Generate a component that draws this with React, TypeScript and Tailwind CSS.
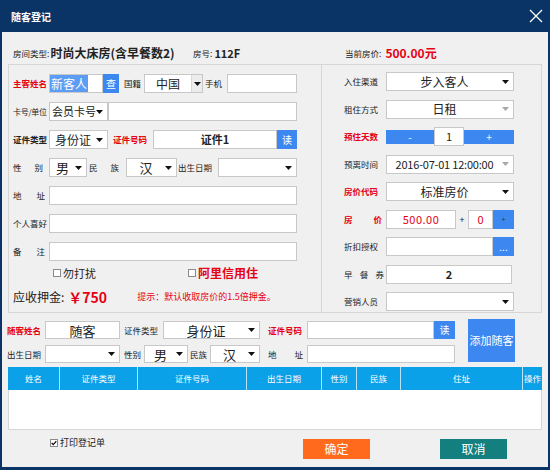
import React from "react";

const RED = "text-[#e60012]";

function Arrow({ muted = false }: { muted?: boolean }) {
  return (
    <svg width="7" height="4" viewBox="0 0 7 4" className="shrink-0">
      <path d="M0 0h7L3.5 4z" fill={muted ? "#a8a8a8" : "#111"} />
    </svg>
  );
}

function Label({
  text,
  className = "",
  red = false,
  bold = false,
}: {
  text: string;
  className?: string;
  red?: boolean;
  bold?: boolean;
}) {
  const chars = text.split(" ");
  return (
    <span
      className={`flex shrink-0 items-center whitespace-nowrap text-[8.5px] leading-none ${
        chars.length > 1 ? "justify-between" : ""
      } ${red ? "font-bold text-[#e60012]" : ""} ${bold ? "font-bold" : ""} ${className}`}
    >
      {chars.map((c, i) => (
        <span key={i}>{c}</span>
      ))}
    </span>
  );
}

function Select({
  value = "",
  className = "",
  valueClass = "text-[12px]",
  muted = false,
  boxed = false,
}: {
  value?: string;
  className?: string;
  valueClass?: string;
  muted?: boolean;
  boxed?: boolean;
}) {
  return (
    <div
      className={`flex h-full shrink-0 items-center border border-[#c8c8c8] bg-white ${className}`}
    >
      <span className={`flex-1 whitespace-nowrap text-center leading-none ${valueClass}`}>{value}</span>
      {boxed ? (
        <span className="flex h-full w-[11px] items-center justify-center border-l border-[#d8d8d8] bg-[#ececec]">
          <Arrow />
        </span>
      ) : (
        <span className="pr-[4px]">
          <Arrow muted={muted} />
        </span>
      )}
    </div>
  );
}

function Input({
  value = "",
  className = "",
  valueClass = "",
}: {
  value?: string;
  className?: string;
  valueClass?: string;
}) {
  return (
    <div
      className={`flex h-full shrink-0 items-center justify-center border border-[#c8c8c8] bg-white ${className}`}
    >
      <span className={`whitespace-nowrap leading-none ${valueClass}`}>{value}</span>
    </div>
  );
}

function BlueBtn({ text, className = "" }: { text: string; className?: string }) {
  return (
    <div
      className={`flex h-full shrink-0 items-center justify-center bg-[#3d87f1] text-[10px] leading-none text-white ${className}`}
    >
      {text}
    </div>
  );
}

function Check({ checked = false }: { checked?: boolean }) {
  return (
    <span className="flex h-[8px] w-[8px] shrink-0 items-center justify-center border border-[#8a8a8a] bg-white">
      {checked && (
        <svg width="7" height="6" viewBox="0 0 7 6">
          <path d="M0.8 3l1.8 1.8L6.2 1" stroke="#111" strokeWidth="1.4" fill="none" />
        </svg>
      )}
    </span>
  );
}

const columns: [string, string][] = [
  ["姓名", "w-[51px]"],
  ["证件类型", "w-[78px]"],
  ["证件号码", "w-[109px]"],
  ["出生日期", "w-[75px]"],
  ["性别", "w-[35px]"],
  ["民族", "w-[44px]"],
  ["住址", "w-[122px]"],
  ["操作", "w-[20px]"],
];

export default function App() {
  return (
    <div className="flex h-[470px] w-[550px] flex-col bg-[#0b3466] px-[2px] pb-[3px] font-['Noto_Sans_CJK_SC','Noto_Sans',sans-serif] text-[#222]">
      {/* title bar */}
      <div className="flex h-[32px] shrink-0 items-center justify-between pl-[9px] pr-[5px]">
        <span className="text-[10px] font-bold text-white">随客登记</span>
        <svg width="14" height="14" viewBox="0 0 14 14">
          <path d="M1 1l12 12M13 1L1 13" stroke="#fff" strokeWidth="1.3" />
        </svg>
      </div>

      <div className="flex flex-1 flex-col bg-[#f0f0f0]">
        {/* room header */}
        <div className="flex h-[32px] shrink-0 items-center pl-[11px] pt-[10px]">
          <div className="flex w-[180px] items-center gap-[1px]">
            <span className="text-[8.5px]">房间类型:</span>
            <span className="text-[12px] font-bold">时尚大床房(含早餐数2)</span>
          </div>
          <div className="flex w-[152px] items-center gap-[2px]">
            <span className="text-[8.5px]">房号:</span>
            <span className="text-[11px] font-bold">112F</span>
          </div>
          <div className="flex items-center gap-[4px]">
            <span className="text-[8.5px]">当前房价:</span>
            <span className={`text-[12px] font-bold ${RED}`}>500.00元</span>
          </div>
        </div>

        {/* main form */}
        <div className="mx-[6px] flex h-[249px] shrink-0 border border-[#d6d6d6]">
          <div className="flex w-[313px] shrink-0 flex-col border-r border-[#d6d6d6] pl-[4px] pt-[9px]">
            <div className="flex flex-col gap-[9px]">
              <div className="flex h-[19px] items-center">
                <Label text="主客姓名" red className="w-[36px]" />
                <div className="flex h-full w-[54px] items-center border border-[#c8c8c8] bg-white">
                  <span className="h-full bg-[#5b9df4] px-[1px] text-[12px] leading-[17px] text-white">
                    新客人
                  </span>
                </div>
                <BlueBtn text="查" className="w-[16px]" />
                <Label text="国籍" className="ml-[5px] w-[20px]" />
                <Select value="中国" boxed className="w-[59px]" />
                <Label text="手机" className="ml-[2px] w-[20px]" />
                <Input className="ml-[2px] w-[70px]" />
              </div>
              <div className="flex h-[19px] items-center">
                <Label text="卡号/单位" className="w-[36px] !text-[8px] tracking-[-0.3px]" />
                <Select value="会员卡号" valueClass="text-[11px] text-left pl-[2px]" className="w-[59px]" />
                <Input className="w-[189px]" />
              </div>
              <div className="flex h-[19px] items-center">
                <Label text="证件类型" bold className="w-[36px]" />
                <Select value="身份证" className="w-[59px]" />
                <Label text="证件号码" red className="ml-[5px] w-[35px]" />
                <Input value="证件1" valueClass="text-[11px] font-bold" className="ml-[5px] w-[124px]" />
                <BlueBtn text="读" className="w-[20px]" />
              </div>
              <div className="flex h-[19px] items-center">
                <span className="w-[36px] shrink-0">
                  <Label text="性 别" className="w-[30px]" />
                </span>
                <Select value="男" valueClass="text-[13px]" className="w-[38px]" />
                <Label text="民 族" className="ml-[2px] w-[30px]" />
                <Select value="汉" valueClass="text-[13px]" className="ml-[7px] w-[51px]" />
                <Label text="出生日期" className="ml-[1px] w-[36px]" />
                <Select className="ml-[4px] w-[79px]" />
              </div>
              {["地 址", "个人喜好", "备 注"].map((t) => (
                <div key={t} className="flex h-[19px] items-center">
                  <span className="w-[36px] shrink-0">
                    <Label text={t} className={t.includes(" ") ? "w-[32px]" : ""} />
                  </span>
                  <Input className="w-[248px]" />
                </div>
              ))}
            </div>
            <div className="mt-[3px] flex h-[18px] items-center pl-[40px]">
              <div className="flex w-[135px] items-center gap-[2px]">
                <Check />
                <span className="text-[11px]">勿打扰</span>
              </div>
              <div className="flex items-center gap-[2px]">
                <Check />
                <span className={`text-[12px] font-bold ${RED}`}>阿里信用住</span>
              </div>
            </div>
            <div className="mt-[6px] flex h-[18px] items-center">
              <span className="text-[12px]">应收押金:</span>
              <span className={`ml-[4px] w-[69px] text-[14px] font-bold ${RED}`}>￥750</span>
              <span className={`text-[9px] ${RED}`}>提示：默认收取房价的1.5倍押金。</span>
            </div>
          </div>

          <div className="flex flex-1 flex-col gap-[8.5px] pl-[22px] pt-[7px]">
            <div className="flex h-[19px] items-center">
              <Label text="入住渠道" className="w-[42px]" />
              <Select value="步入客人" className="w-[128px]" />
            </div>
            <div className="flex h-[19px] items-center">
              <Label text="租住方式" className="w-[42px]" />
              <Select value="日租" muted className="w-[128px]" />
            </div>
            <div className="flex h-[19px] items-center">
              <Label text="预住天数" red className="w-[42px]" />
              <div className="flex h-full w-[128px] items-center">
                <div className="flex h-[14px] w-[48px] items-center justify-center bg-[#3d87f1] text-[10px] leading-none text-white">
                  -
                </div>
                <div className="flex h-full w-[30px] items-center justify-center border border-[#c8c8c8] bg-white text-[11px] leading-none">
                  1
                </div>
                <div className="flex h-[14px] flex-1 items-center justify-center bg-[#3d87f1] text-[10px] leading-none text-white">
                  +
                </div>
              </div>
            </div>
            <div className="flex h-[19px] items-center">
              <Label text="预离时间" className="w-[42px]" />
              <Select
                value="2016-07-01 12:00:00"
                valueClass="text-[11px] tracking-[-0.2px]"
                muted
                className="w-[128px]"
              />
            </div>
            <div className="flex h-[19px] items-center">
              <Label text="房价代码" red className="w-[42px]" />
              <Select value="标准房价" className="w-[128px]" />
            </div>
            <div className="flex h-[19px] items-center">
              <span className="w-[42px] shrink-0">
                <Label text="房 价" red className="w-[38px]" />
              </span>
              <Input value="500.00" valueClass={`text-[11px] tracking-[0.5px] ${RED}`} className="w-[70px]" />
              <span className="w-[12px] text-center text-[9px] leading-none">+</span>
              <Input value="0" valueClass={`text-[11px] ${RED}`} className="w-[25px]" />
              <BlueBtn text="+" className="w-[21px] !text-[7px] !text-[#333]" />
            </div>
            <div className="flex h-[19px] items-center">
              <Label text="折扣授权" className="w-[42px]" />
              <Input className="w-[107px]" />
              <BlueBtn text="..." className="w-[21px]" />
            </div>
            <div className="flex h-[19px] items-center">
              <span className="w-[42px] shrink-0">
                <Label text="早 餐 券" className="w-[40px]" />
              </span>
              <Input value="2" valueClass="text-[11px] font-bold" className="w-[126px]" />
            </div>
            <div className="flex h-[19px] items-center">
              <Label text="营销人员" className="w-[42px]" />
              <Select className="w-[128px]" />
            </div>
          </div>
        </div>

        {/* companion guest */}
        <div className="flex h-[53px] shrink-0 pl-[5px] pt-[6px]">
          <div className="mt-[2px] flex flex-col gap-[6px]">
            <div className="flex h-[18px] items-center">
              <Label text="随客姓名" red className="w-[36px]" />
              <Input value="随客" valueClass="text-[13px]" className="ml-[2px] w-[75px]" />
              <Label text="证件类型" className="ml-[4px] w-[34px]" />
              <Select value="身份证" valueClass="text-[13px]" className="ml-[5px] w-[97px]" />
              <Label text="证件号码" red className="ml-[8px] w-[35px]" />
              <Input className="ml-[4px] w-[127px]" />
              <BlueBtn text="读" className="w-[21px]" />
            </div>
            <div className="flex h-[18px] items-center">
              <Label text="出生日期" className="w-[36px]" />
              <Select className="ml-[2px] w-[75px]" />
              <Label text="性别" className="ml-[4px] w-[18px]" />
              <Select value="男" valueClass="text-[13px]" className="ml-[2px] w-[44px]" />
              <Label text="民族" className="ml-[2px] w-[18px]" />
              <Select value="汉" valueClass="text-[13px]" className="ml-[2px] w-[50px]" />
              <Label text="地 址" className="ml-[8px] w-[35px]" />
              <Input className="ml-[4px] w-[148px]" />
            </div>
          </div>
          <div className="ml-[13px] flex h-[43px] w-[47px] items-center justify-center whitespace-nowrap bg-[#3d87f1] text-[11px] leading-none text-white">
            添加随客
          </div>
        </div>

        {/* companion table */}
        <div className="mx-[6px] mt-[1px] shrink-0">
          <div className="flex h-[23px] bg-[#0aa1e8]">
            {columns.map(([name, w], i) => (
              <div
                key={name}
                className={`flex h-full items-center justify-center whitespace-nowrap text-[8.5px] text-white ${w} ${
                  i > 0 ? "border-l border-[#b9e3f8]" : ""
                }`}
              >
                {name}
              </div>
            ))}
          </div>
          <div className="h-[40px] border border-t-0 border-[#d6d6d6] bg-white" />
        </div>

        {/* footer */}
        <div className="flex flex-1 items-start pl-[48px] pt-[6px]">
          <div className="flex h-[14px] w-[253px] items-center gap-[2px]">
            <Check checked />
            <span className="text-[9px]">打印登记单</span>
          </div>
          <div className="mt-[3px] flex h-[20px] w-[67px] items-center justify-center bg-[#ff6a1c] text-[12px] text-white">
            确定
          </div>
          <div className="ml-[70px] mt-[3px] flex h-[20px] w-[67px] items-center justify-center bg-[#13807f] text-[12px] text-white">
            取消
          </div>
        </div>
      </div>
    </div>
  );
}
